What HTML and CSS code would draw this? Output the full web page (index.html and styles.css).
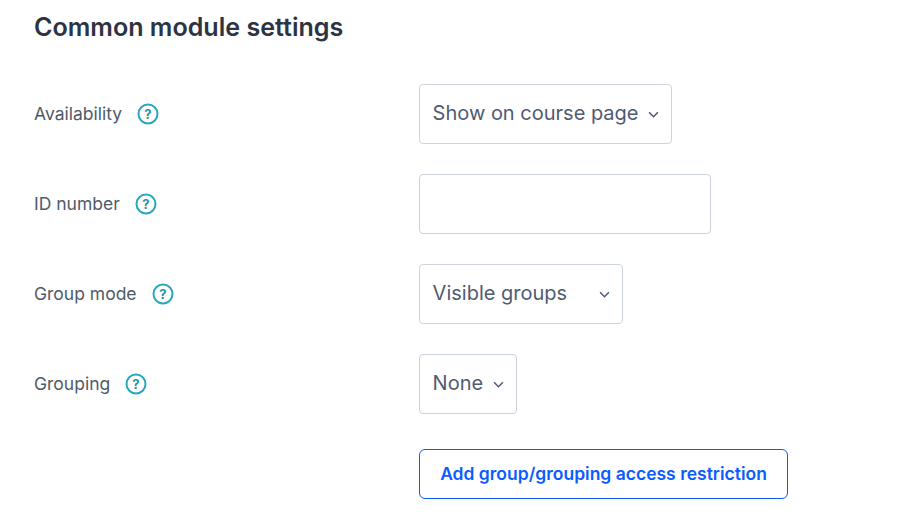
FILE: index.html
```html
<!DOCTYPE html>
<html lang="en">
<head>
<meta charset="utf-8">
<title>Common module settings</title>
<link rel="stylesheet" href="styles.css">
</head>
<body>
<h3 class="title">Common module settings</h3>
<form class="form">
  <div class="row">
    <div class="label"><span>Availability</span><svg class="help" viewBox="0 0 22 22"><circle cx="11" cy="11" r="9.5"/><text x="11" y="15.5" text-anchor="middle">?</text></svg></div>
    <div class="control w-253"><span>Show on course page</span><svg class="chev" viewBox="0 0 10 6"><path d="M1 1l4 4 4-4"/></svg></div>
  </div>
  <div class="row">
    <div class="label"><span>ID number</span><svg class="help" viewBox="0 0 22 22"><circle cx="11" cy="11" r="9.5"/><text x="11" y="15.5" text-anchor="middle">?</text></svg></div>
    <div class="control w-292"></div>
  </div>
  <div class="row">
    <div class="label"><span>Group mode</span><svg class="help" viewBox="0 0 22 22"><circle cx="11" cy="11" r="9.5"/><text x="11" y="15.5" text-anchor="middle">?</text></svg></div>
    <div class="control w-204"><span>Visible groups</span><svg class="chev" viewBox="0 0 10 6"><path d="M1 1l4 4 4-4"/></svg></div>
  </div>
  <div class="row">
    <div class="label"><span>Grouping</span><svg class="help" viewBox="0 0 22 22"><circle cx="11" cy="11" r="9.5"/><text x="11" y="15.5" text-anchor="middle">?</text></svg></div>
    <div class="control w-98"><span>None</span><svg class="chev" viewBox="0 0 10 6"><path d="M1 1l4 4 4-4"/></svg></div>
  </div>
  <div class="action"><button type="button" class="btn">Add group/grouping access restriction</button></div>
</form>
</body>
</html>
```
FILE: styles.css
```css
html, body { margin: 0; padding: 0; background: #fff; }
body { width: 902px; height: 521px; overflow: hidden; font-family: Inter, "Liberation Sans", sans-serif; color: #4b5563; }
.title { margin: 0; padding: 12px 0 0 34px; font-size: 25.08px; line-height: 30px; font-weight: 600; color: #2c3442; }
.form { padding: 42px 0 0 34px; display: flex; flex-direction: column; gap: 30px; }
.row { display: flex; align-items: center; height: 60px; }
.label { width: 385px; height: 58px; margin-bottom: 2px; display: flex; align-items: center; gap: 15.2px; font-size: 17.5px; color: #4f5a68; }
.help { width: 22px; height: 22px; flex: none; margin-top: 2px; }
.help circle { fill: none; stroke: #27a8bd; stroke-width: 2; }
.help text { font: 700 13px Inter, sans-serif; fill: #1f93a8; }
.control { box-sizing: border-box; height: 60px; display: flex; align-items: center; justify-content: space-between; padding: 0 12px 2px 12.6px; border: 1px solid #cdd3dd; border-radius: 4px; font-size: 20px; color: #4f5b72; background: #fff; }
.w-253 { width: 253px; }
.w-292 { width: 292px; }
.w-204 { width: 204px; }
.w-98 { width: 98px; }
.chev { width: 11px; height: 7px; flex: none; margin-top: 3px; }
.chev path { fill: none; stroke: #4f5b72; stroke-width: 1.4; }
.action { padding: 5px 0 0 385px; }
.btn { box-sizing: border-box; width: 369px; height: 50px; padding: 0 0 2px; background: #fff; border: 1px solid #0b5cff; border-radius: 6px; color: #0b5cff; font: 600 17.5px Inter, sans-serif; }
```
